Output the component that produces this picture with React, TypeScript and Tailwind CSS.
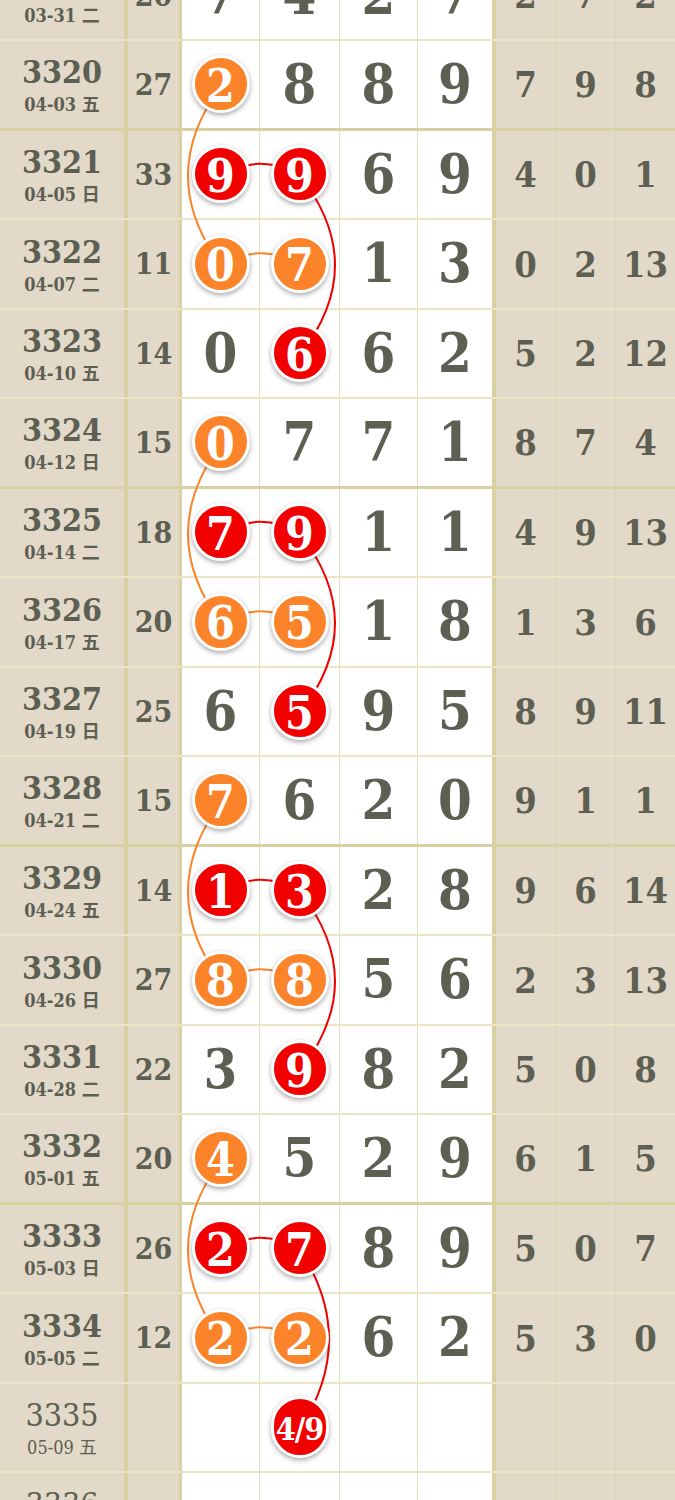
import React from "react";

type Mark = "o" | "r" | null;

type Row = {
  p: string;
  d: string;
  s: string;
  n: string[];
  r: string[];
  m: [Mark, Mark];
};

const rows: Row[] = [
  { p: "3319", d: "03-31 二", s: "20", n: ["7", "4", "2", "7"], r: ["2", "7", "2"], m: [null, null] },
  { p: "3320", d: "04-03 五", s: "27", n: ["2", "8", "8", "9"], r: ["7", "9", "8"], m: ["o", null] },
  { p: "3321", d: "04-05 日", s: "33", n: ["9", "9", "6", "9"], r: ["4", "0", "1"], m: ["r", "r"] },
  { p: "3322", d: "04-07 二", s: "11", n: ["0", "7", "1", "3"], r: ["0", "2", "13"], m: ["o", "o"] },
  { p: "3323", d: "04-10 五", s: "14", n: ["0", "6", "6", "2"], r: ["5", "2", "12"], m: [null, "r"] },
  { p: "3324", d: "04-12 日", s: "15", n: ["0", "7", "7", "1"], r: ["8", "7", "4"], m: ["o", null] },
  { p: "3325", d: "04-14 二", s: "18", n: ["7", "9", "1", "1"], r: ["4", "9", "13"], m: ["r", "r"] },
  { p: "3326", d: "04-17 五", s: "20", n: ["6", "5", "1", "8"], r: ["1", "3", "6"], m: ["o", "o"] },
  { p: "3327", d: "04-19 日", s: "25", n: ["6", "5", "9", "5"], r: ["8", "9", "11"], m: [null, "r"] },
  { p: "3328", d: "04-21 二", s: "15", n: ["7", "6", "2", "0"], r: ["9", "1", "1"], m: ["o", null] },
  { p: "3329", d: "04-24 五", s: "14", n: ["1", "3", "2", "8"], r: ["9", "6", "14"], m: ["r", "r"] },
  { p: "3330", d: "04-26 日", s: "27", n: ["8", "8", "5", "6"], r: ["2", "3", "13"], m: ["o", "o"] },
  { p: "3331", d: "04-28 二", s: "22", n: ["3", "9", "8", "2"], r: ["5", "0", "8"], m: [null, "r"] },
  { p: "3332", d: "05-01 五", s: "20", n: ["4", "5", "2", "9"], r: ["6", "1", "5"], m: ["o", null] },
  { p: "3333", d: "05-03 日", s: "26", n: ["2", "7", "8", "9"], r: ["5", "0", "7"], m: ["r", "r"] },
  { p: "3334", d: "05-05 二", s: "12", n: ["2", "2", "6", "2"], r: ["5", "3", "0"], m: ["o", "o"] },
  { p: "3335", d: "05-09 五", s: "", n: ["", "4/9", "", ""], r: ["", "", ""], m: [null, "r"] },
  { p: "3336", d: "05-12 日", s: "", n: ["", "", "", ""], r: ["", "", ""], m: [null, null] },
];

const ROW_H = 89.5;
const C3 = 221;
const C4 = 300;
const ORANGE = "#fb8329";
const RED = "#f20000";

const groupEnd = (p: string) => ["3320", "3324", "3328", "3332", "3336"].includes(p);

const cy = (i: number) => i * ROW_H + ROW_H / 2;

function Ball({ kind, value }: { kind: Mark; value: string }) {
  const wide = value.length > 1;
  return (
    <div
      className={
        "relative z-10 flex items-center justify-center rounded-full border-[3px] border-white text-white shadow-[0_2px_5px_rgba(0,0,0,0.35)] " +
        (kind === "o" ? "bg-[#fb8329] " : "bg-[#f20000] ") +
        (wide ? "h-[62px] w-[58px] text-[32px] tracking-[-1px]" : "h-[58px] w-[58px] text-[46px]")
      }
    >
      <span className="leading-none pt-[3px]">{value}</span>
    </div>
  );
}

function Lines() {
  const paths: { d: string; c: string }[] = [];
  rows.forEach((row, i) => {
    const y = cy(i);
    if (row.m[0] && row.m[0] === row.m[1]) {
      paths.push({
        d: `M ${C3} ${y} Q ${(C3 + C4) / 2} ${y - 24} ${C4} ${y}`,
        c: row.m[0] === "o" ? ORANGE : RED,
      });
    }
    if (row.m[0] === "o" && row.m[1] === null && rows[i + 2]?.m[0] === "o") {
      paths.push({
        d: `M ${C3} ${y} Q ${C3 - 66} ${cy(i + 1)} ${C3} ${cy(i + 2)}`,
        c: ORANGE,
      });
    }
    if (row.m[0] === "r" && row.m[1] === "r" && rows[i + 2]?.m[1] === "r") {
      const bulge = i + 2 === 16 ? 58 : 70;
      paths.push({
        d: `M ${C4} ${y} Q ${C4 + bulge} ${cy(i + 1)} ${C4} ${cy(i + 2)}`,
        c: RED,
      });
    }
  });
  return (
    <svg
      className="pointer-events-none absolute left-0 top-0"
      width={675}
      height={rows.length * ROW_H}
      viewBox={`0 0 675 ${rows.length * ROW_H}`}
    >
      {paths.map((p, k) => (
        <path key={k} d={p.d} fill="none" stroke={p.c} strokeWidth={2} />
      ))}
    </svg>
  );
}

export default function App() {
  return (
    <div className="h-[1500px] w-[675px] overflow-hidden bg-[#e3d9c8] font-['DejaVu_Serif_Condensed','DejaVu_Serif','Noto_Sans_CJK_SC',serif] font-bold font-stretch-condensed text-[#5c5f52]">
      <div className="relative mt-[-48.5px]">
        {rows.map((row, i) => {
          const thick = groupEnd(row.p);
          const last = row.p === "3335" || row.p === "3336";
          return (
            <div
              key={row.p}
              className={
                "grid h-[89.5px] grid-cols-[128px_54px_78px_80px_78px_78px_60px_60px_59px] " +
                (thick ? "border-b-[3px] border-[#d9d1a2]" : "border-b-2 border-[#ebe5c6]")
              }
            >
              <div className="flex flex-col items-center justify-center border-r-4 border-[#d9d1a2] pt-[4px]">
                <span className={"text-[32px] leading-[34px] " + (last ? "font-normal" : "")}>{row.p}</span>
                <span className={"mt-[4px] text-[18px] leading-[24px] " + (last ? "font-normal" : "")}>{row.d}</span>
              </div>
              <div className="flex items-center justify-center border-r-[3px] border-[#d9d1a2] text-[30px]">
                {row.s}
              </div>
              {row.n.map((v, k) => {
                const mark = k < 2 ? row.m[k] : null;
                return (
                  <div
                    key={k}
                    className={
                      "flex items-center justify-center bg-white text-[54px] " +
                      (k === 3 ? "border-r-4 border-[#d9d1a2]" : "border-r border-[#e6dfbd]")
                    }
                  >
                    {mark && v ? <Ball kind={mark} value={v} /> : <span>{v}</span>}
                  </div>
                );
              })}
              {row.r.map((v, k) => (
                <div
                  key={k}
                  className={
                    "flex items-center justify-center text-[36px] " +
                    (k < 2 ? "border-r border-[#d9d1a2]/70" : "")
                  }
                >
                  {v}
                </div>
              ))}
            </div>
          );
        })}
        <Lines />
      </div>
    </div>
  );
}
